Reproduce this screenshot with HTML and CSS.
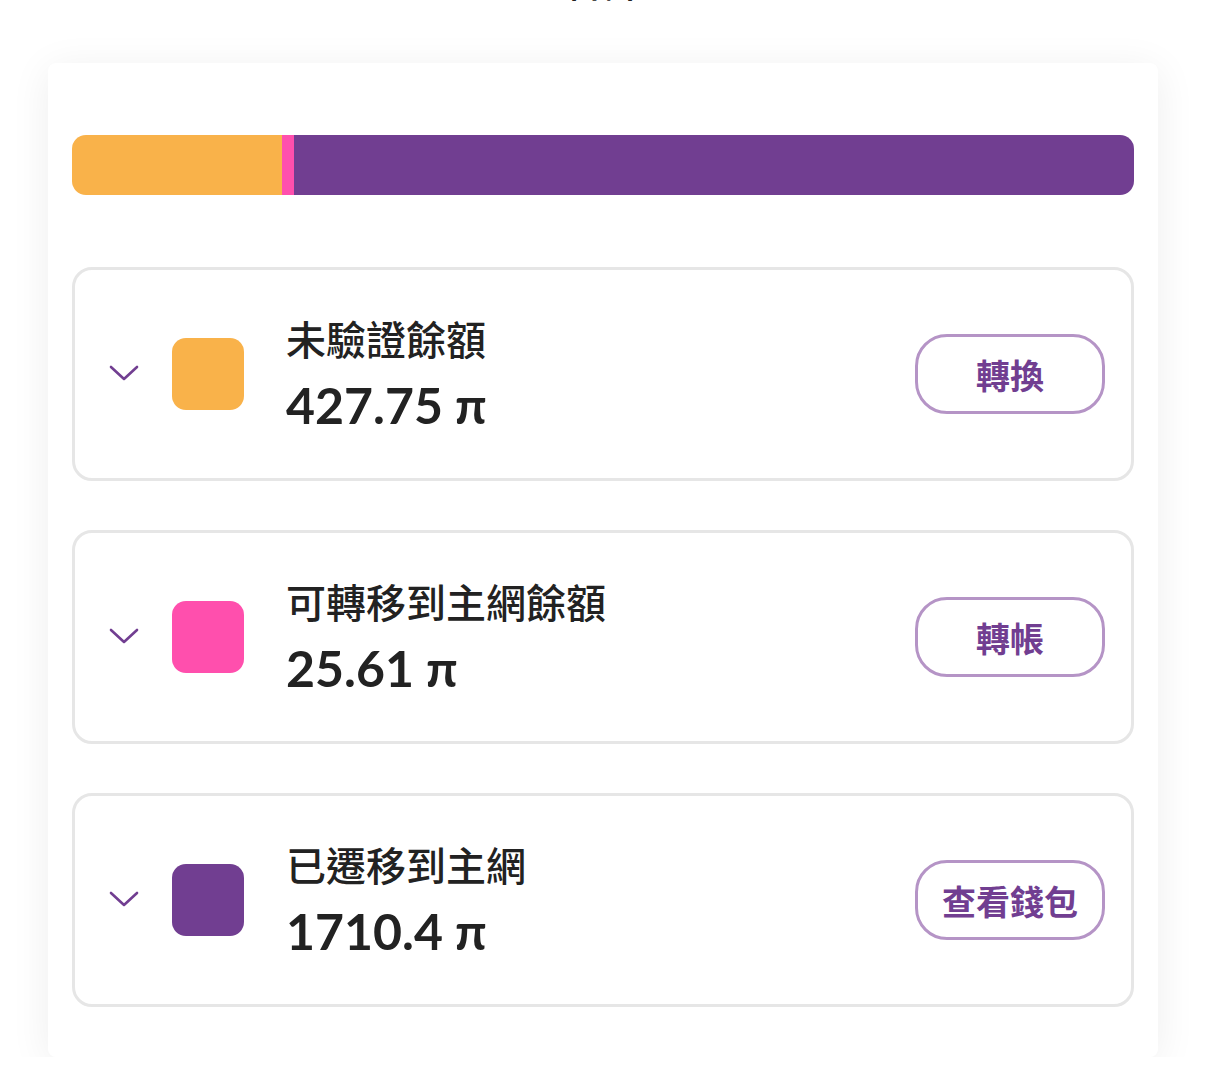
FILE: index.html
```html
<!DOCTYPE html>
<html lang="zh-Hant">

<head>
    <meta charset="UTF-8" />
    <meta name="viewport" content="width=device-width, initial-scale=1.0" />
    <link rel="stylesheet" href="styles.css">
    <title>餘額</title>
</head>

<body>
    <h2 class="page-title">合計</h2>
    <section class="panel">
        <div class="bar">
            <div class="seg orange" style="width: 19.77%"></div>
            <div class="seg pink" style="width: 1.18%"></div>
            <div class="seg purple" style="flex: 1"></div>
        </div>

        <div class="item">
            <svg class="chevron" width="30" height="18" viewBox="0 0 30 18">
                <path d="M2 3 L15 15 L28 3" fill="none" stroke="#713e91" stroke-width="2.6" stroke-linecap="round" stroke-linejoin="round" />
            </svg>
            <div class="swatch orange"></div>
            <div class="info">
                <div class="label">未驗證餘額</div>
                <div class="amount">427.75 π</div>
            </div>
            <button type="button" class="btn">轉換</button>
        </div>

        <div class="item">
            <svg class="chevron" width="30" height="18" viewBox="0 0 30 18">
                <path d="M2 3 L15 15 L28 3" fill="none" stroke="#713e91" stroke-width="2.6" stroke-linecap="round" stroke-linejoin="round" />
            </svg>
            <div class="swatch pink"></div>
            <div class="info">
                <div class="label">可轉移到主網餘額</div>
                <div class="amount">25.61 π</div>
            </div>
            <button type="button" class="btn">轉帳</button>
        </div>

        <div class="item">
            <svg class="chevron" width="30" height="18" viewBox="0 0 30 18">
                <path d="M2 3 L15 15 L28 3" fill="none" stroke="#713e91" stroke-width="2.6" stroke-linecap="round" stroke-linejoin="round" />
            </svg>
            <div class="swatch purple"></div>
            <div class="info">
                <div class="label">已遷移到主網</div>
                <div class="amount">1710.4 π</div>
            </div>
            <button type="button" class="btn">查看錢包</button>
        </div>
    </section>
</body>

</html>
```

FILE: styles.css
```css
* {
    margin: 0;
    padding: 0;
    box-sizing: border-box;
}

body {
    background-color: #ffffff;
    font-family: "Lato", "Noto Sans CJK TC", sans-serif;
    color: #222222;
    overflow: hidden;
}

.page-title {
    height: 48px;
    margin-top: -43px;
    margin-bottom: 58px;
    text-align: center;
    font-family: "Noto Sans CJK TC", sans-serif;
    font-size: 38px;
    font-weight: 500;
    line-height: 48px;
}

.panel {
    margin: 0 48px;
    padding: 72px 24px 50px;
    background-color: #ffffff;
    border-radius: 8px;
    box-shadow: 0 6px 40px rgba(0, 0, 0, 0.07);
}

.bar {
    display: flex;
    height: 60px;
    border-radius: 14px;
    overflow: hidden;
    margin-bottom: 72px;
}

.orange {
    background-color: #f9b24a;
}

.pink {
    background-color: #ff4fad;
}

.purple {
    background-color: #713e91;
}

.item {
    display: flex;
    align-items: center;
    height: 214px;
    padding: 0 26px 0 34px;
    border: 3px solid #e6e6e6;
    border-radius: 20px;
    margin-bottom: 49px;
}

.item:last-child {
    margin-bottom: 0;
}

.chevron {
    margin-right: 33px;
    margin-top: -2px;
}

.swatch {
    width: 72px;
    height: 72px;
    border-radius: 14px;
    margin-right: 42px;
}

.info {
    flex: 1;
    margin-top: -4px;
}

.label {
    font-family: "Noto Sans CJK TC", sans-serif;
    font-size: 40px;
    font-weight: 500;
    line-height: 54px;
    margin-bottom: 11px;
}

.amount {
    font-family: "Lato", "Noto Sans", sans-serif;
    font-size: 50px;
    font-weight: 700;
    line-height: 58px;
}

.btn {
    width: 190px;
    height: 80px;
    border: 3px solid #b594c6;
    border-radius: 32px;
    background-color: #ffffff;
    color: #713e91;
    font-family: "Noto Sans CJK TC", sans-serif;
    font-size: 34px;
    font-weight: 700;
}
```
